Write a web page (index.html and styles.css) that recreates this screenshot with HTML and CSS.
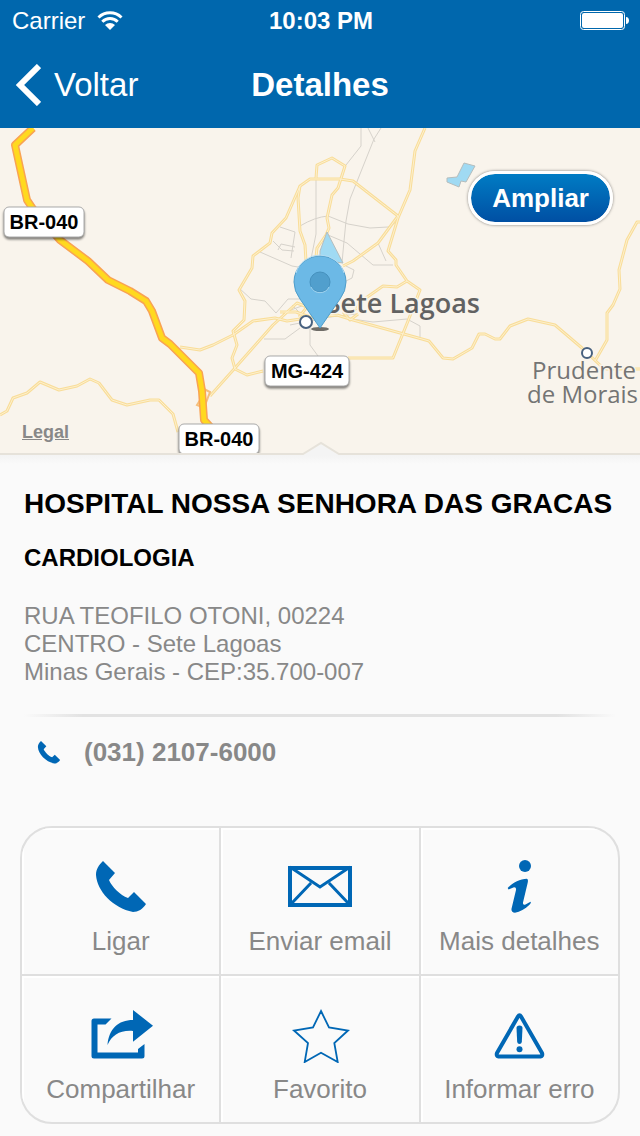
FILE: index.html
```html
<!DOCTYPE html>
<html lang="pt-BR">
<head>
    <meta charset="UTF-8">
    <meta name="viewport" content="width=device-width, initial-scale=1.0">
    <title>Detalhes</title>
    <link rel="stylesheet" href="styles.css">
</head>
<body>
    <header class="top">
        <div class="status-bar">
            <div class="carrier">
                <span>Carrier</span>
                <svg width="26" height="20" viewBox="0 0 26 20" aria-hidden="true">
                    <path d="M1.5 6.5a16.500 16.500 0 0 1 23 0M5.300 10.700a11 11 0 0 1 15.400 0" fill="none" stroke="#fff" stroke-width="3"/>
                    <path d="M13 19l-5-5a7.500 7.500 0 0 1 10 0z" fill="#fff"/>
                </svg>
            </div>
            <time class="clock">10:03 PM</time>
            <svg class="battery" width="50" height="20" viewBox="0 0 50 20" aria-hidden="true">
                <rect x="0.5" y="0.5" width="44" height="18" rx="3" fill="none" stroke="#fff"/>
                <rect x="2" y="2" width="41" height="15" rx="2" fill="#fff"/>
                <path d="M46 6c4 0 4 7 0 7z" fill="#fff"/>
            </svg>
        </div>
        <nav class="nav-bar">
            <a class="back" href="#">
                <svg width="26" height="42" viewBox="0 0 26 42" aria-hidden="true">
                    <path d="M24 2L5 21l19 19" fill="none" stroke="#fff" stroke-width="6"/>
                </svg>
                Voltar
            </a>
            <span class="nav-title">Detalhes</span>
        </nav>
    </header>

    <section class="map">
        <svg class="map-canvas" viewBox="0 0 640 328" role="img" aria-label="Mapa de Sete Lagoas">
            <defs>
                <g id="roads">
                    <path d="M0 287l7-4 6-13 14-5 13-11 19 8 18-4 13-7 9 4 13 17 15 5 23-5h9l14 14 5 18"/>
                    <path d="M425 0l-10 23-5 39-12 28-10 33 8 9v5l11 16 13 9-12 31-15 37h-45"/>
                    <path d="M316 50l1-13 15-7 13 8-7 22-6 7-5 23 2 10-3 7-9 13-2 18"/>
                    <path d="M263 243l-16 4-12-6-3-11 5-13-4-14 11-11 1-19-6-11 13-22 1-12 17-13 2-10 14-15 14-32 10-7h30l13 2 45 35-20 27-25 18-10 5"/>
                    <path d="M300 58l-2 12 2 33 5 14 1 16"/>
                    <path d="M180 219l20 3 13-5 20-10 20-14 22-3 12 3 20-3 30-3 16 5 69 19 7 2 14 17 10 1 19-11 7-14h6l10 5h5l10-13 18-7 27 6 27 23 20 19 5 2h33"/>
                    <path d="M210 268l25-28 38-43 24-22 10 4-8 10M280 184h16l14 5"/>
                    <path d="M595 233l12-21v-27l6-8 7-16-1-19 8-30 10-18h3"/>
                    <path d="M350 184l7-4 6-8 20-14 14 1 10-6M343 184l7 8 8-6"/>
                </g>
            </defs>
            <!-- ruas -->
            <g class="street">
                <path d="M361 0v18l-15 19M368 0l7 14M381 0l-7 11-14 35-10 25-4 22-2 20-2 22"/>
                <path d="M316 51v55l-5 25M300 98q15-9 28-10l20 8 22 4 18-1 10-6"/>
                <path d="M280 99l15 5-4 26M273 113l9 9 12 1M278 122l3-6 14 3M260 124l32 14 12 2M328 107l19 8 26 22h20M378 115l8 18M346 138l8 4-2 8-8 4"/>
                <path d="M239 160l12 11 14 2 11 12M264 211h21l15-11M310 199v18l8 11M276 185l12-14h14M345 190l28 4 34-3 13 7v14M290 197l40-8 26-3M292 177l12 12M288 183l22-8"/>
            </g>
            <!-- estradas -->
            <use class="road" href="#roads"/>
            <use class="road-center" href="#roads"/>
            <path class="junction" d="M202 260l8 4-6 16-7-3 5-8"/>
            <path class="highway-edge" d="M33 0L15 17l12 55 6 9 27 31 28 21 20 19 22 11 16 10 6 10 10 27 8 6 29 29 3 18 2 29 11 12 12 26"/>
            <path class="highway" d="M33 0L15 17l12 55 6 9 27 31 28 21 20 19 22 11 16 10 6 10 10 27 8 6 29 29 3 18 2 29 11 12 12 26"/>
            <!-- lagoas -->
            <path class="water" d="M464 35l11 3-9 16-5-1-2 6-12-5v-4l10-1zM327 104l16 31-23-3v-9z"/>

            <circle class="town" cx="306" cy="194" r="6"/>
            <circle class="town" cx="587" cy="225" r="5"/>
            <text class="city" x="480" y="185" text-anchor="end">Sete Lagoas</text>
            <text class="village">
                <tspan x="532" y="251">Prudente</tspan>
                <tspan x="527" y="275">de Morais</tspan>
            </text>

            <g class="shield">
                <rect x="4" y="79" width="80" height="30" rx="5"/>
                <text x="44" y="101">BR-040</text>
                <rect x="265" y="228" width="84" height="30" rx="5"/>
                <text x="307" y="250">MG-424</text>
                <rect x="179" y="296" width="80" height="30" rx="5"/>
                <text x="219" y="318">BR-040</text>
            </g>

            <!-- marcador -->
            <ellipse cx="320" cy="201" rx="9" ry="2" fill="#4c4a46" opacity="0.8"/>
            <path d="M320 200l-20-29q-6-8-6-17a26 26 0 0 1 52 0q0 9-6 17z" fill="#6cb9e6" stroke="#4f9dca" stroke-width="1"/>
            <path d="M296 145a25 25 0 0 1 48 0" fill="none" stroke="#b5dcf2"/>
            <circle cx="320" cy="154" r="10" fill="#519fcd" stroke="#4691be"/>
            <path d="M311 159a10 10 0 0 0 18 0" fill="none" stroke="#9fd2ee"/>

            <path d="M0 327h303l18-11 18 11h301v1H0z" fill="#f4f4f4"/>
            <path d="M0 326h303l18-11 18 11h301" fill="none" stroke="#e6e2da" stroke-width="2"/>
        </svg>
        <button class="zoom-button" type="button">Ampliar</button>
        <a class="legal" href="#">Legal</a>
    </section>

    <main class="details">
        <h1>HOSPITAL NOSSA SENHORA DAS GRACAS</h1>
        <h2>CARDIOLOGIA</h2>
        <address>
            RUA TEOFILO OTONI, 00224<br>
            CENTRO - Sete Lagoas<br>
            Minas Gerais - CEP:35.700-007
        </address>
        <hr>
        <a class="phone" href="tel:+553121076000">
            <svg width="24" height="24" viewBox="5 0 54 54" aria-hidden="true">
                <path d="M14 2l12 12-6 7c3 7 11 15 19 18l6-6 12 12c-3 5-8 8-13 8C24 49 8 32 7 16 7 10 10 6 14 2z"/>
            </svg>
            (031) 2107-6000
        </a>
    </main>

    <div class="actions">
        <button type="button">
            <svg width="64" height="56" viewBox="0 0 64 56" aria-hidden="true">
                <path d="M14 2l12 12-6 7c3 7 11 15 19 18l6-6 12 12c-3 5-8 8-13 8C24 49 8 32 7 16 7 10 10 6 14 2z"/>
            </svg>
            Ligar
        </button>
        <button type="button">
            <svg width="64" height="56" viewBox="0 0 64 56" aria-hidden="true">
                <g class="line">
                    <rect x="2" y="9" width="60" height="37" stroke-width="4"/>
                    <path d="M2 8l30 20L62 8M23 24L3 45M41 24l20 21" stroke-width="3"/>
                </g>
            </svg>
            Enviar email
        </button>
        <button type="button">
            <svg width="64" height="56" viewBox="0 0 64 56" aria-hidden="true">
                <circle cx="38" cy="7" r="6"/>
                <path d="M20.700 29C26 23 33 20 40 19.700q1.500 1 .7 4L36 43.500q-.5 3 2.500 2l5-2.700q1 1-1 3C38 50 33 53 28 53.700q-4-.2-3.500-4L29 31q.5-3-2-2.800L21.500 30.500z"/>
            </svg>
            Mais detalhes
        </button>
        <button type="button">
            <svg width="64" height="56" viewBox="0 0 64 56" aria-hidden="true">
                <path d="M22.500 11.500H5A2.500 2.500 0 0 0 2.500 14v35A2.500 2.500 0 0 0 5 51.500h48a2.500 2.500 0 0 0 2.500-2.500V37L49 42v3.500H8.500v-28h8z"/>
                <path d="M18.500 38C20 22 29 13 44 13V3l20 15.700-20 16V24C31 23 23 28 18.500 38z"/>
            </svg>
            Compartilhar
        </button>
        <button type="button">
            <svg width="64" height="56" viewBox="0 0 64 56" aria-hidden="true">
                <path class="line" stroke-width="1.800" d="M33 4l8 16.500 19 3L46.300 36l3.400 19L33 45.700 16.700 55 20 36 6 23.500l19-3z"/>
            </svg>
            Favorito
        </button>
        <button type="button">
            <svg width="64" height="56" viewBox="0 0 64 56" aria-hidden="true">
                <path class="line" stroke-width="4" stroke-linejoin="round" d="M31 9.500q1.500-2.500 3 0L55 46q1 3-1.500 3.500h-42Q9 49 10 46z"/>
                <path d="M29.500 21q0-2.500 3-2.500t3 2.500l-.7 14q-.3 2-2.300 2t-2.300-2z"/>
                <circle cx="32.500" cy="42.300" r="3"/>
            </svg>
            Informar erro
        </button>
    </div>
</body>
</html>
```
FILE: styles.css
```css
* {
    margin: 0;
    padding: 0;
    box-sizing: border-box;
}

body {
    font-family: "Helvetica Neue", "Liberation Sans", Arial, sans-serif;
    background: #fafafa;
    color: #888;
}

a {
    color: inherit;
    text-decoration: none;
}

button {
    font-family: inherit;
    border: none;
    cursor: pointer;
}

.top {
    background: #0067ad;
    color: #fff;
}

.status-bar,
.nav-bar {
    display: grid;
    grid-template-columns: 1fr auto 1fr;
    align-items: center;
}

.status-bar {
    height: 42px;
    padding: 0 10px 0 12px;
    font-size: 24px;
}

.carrier {
    display: flex;
    align-items: center;
    gap: 12px;
}

.clock {
    font-weight: bold;
}

.battery {
    justify-self: end;
}

.nav-bar {
    height: 86px;
    padding: 0 15px;
    font-size: 33px;
}

.back {
    display: flex;
    align-items: center;
    gap: 13px;
}

.nav-title {
    font-weight: bold;
}

/* Mapa */
.map {
    position: relative;
    background: #f9f4ec;
}

.map-canvas {
    display: block;
    width: 100%;
    height: auto;
}

.street {
    fill: none;
    stroke: #d6d2cb;
    stroke-width: 1;
}

.road,
.road-center {
    fill: none;
    stroke: #f9dd98;
    stroke-width: 3;
    stroke-linejoin: round;
}

.road-center {
    stroke: #fdf0cf;
    stroke-width: 1;
}

.junction {
    fill: none;
    stroke: #f5bf7c;
    stroke-width: 2;
}

.highway,
.highway-edge {
    fill: none;
    stroke: #ffd91f;
    stroke-width: 5;
    stroke-linejoin: round;
}

.highway-edge {
    stroke: #f9a353;
    stroke-width: 8;
}

.water {
    fill: #a0daf3;
    stroke: #b5bdbd;
    stroke-width: 1;
}

.town {
    fill: #fff;
    stroke: #48617f;
    stroke-width: 2;
}

.city,
.village {
    font-family: "Open Sans", "Noto Sans", sans-serif;
    font-size: 27px;
    font-weight: 600;
    fill: #626262;
    stroke: #f9f4ec;
    stroke-width: 3;
    paint-order: stroke;
}

.village {
    font-size: 24px;
    font-weight: 500;
    fill: #747474;
}

.shield rect {
    fill: #fff;
    stroke: #aaa;
    filter: drop-shadow(0 2px 1px rgba(0, 0, 0, 0.5));
}

.shield text {
    font-size: 20px;
    font-weight: bold;
    text-anchor: middle;
    fill: #000;
}

.zoom-button {
    position: absolute;
    top: 43px;
    right: 27px;
    padding: 9px 21px;
    border: 3px solid #fff;
    border-radius: 27px;
    background: linear-gradient(#007cc4, #004fa3) padding-box;
    box-shadow: 0 0 3px rgba(0, 0, 0, 0.5);
    color: #fff;
    font-size: 26px;
    font-weight: bold;
    line-height: 30px;
}

.legal {
    position: absolute;
    left: 22px;
    bottom: 13px;
    font-size: 18px;
    font-weight: bold;
    text-decoration: underline;
}

/* Dados do local */
.details {
    padding: 30px 24px 0;
    background: linear-gradient(#f4f4f4, #fafafa 8px);
}

h1 {
    font-size: 28px;
    line-height: 36px;
    color: #000;
}

h2 {
    margin-top: 21px;
    font-size: 24px;
    line-height: 30px;
    color: #000;
}

address {
    margin-top: 29px;
    font-size: 24px;
    font-style: normal;
    line-height: 28px;
}

hr {
    height: 3px;
    margin-top: 28px;
    border: none;
    background: linear-gradient(90deg, #fafafa, #e2e2e2 10%, #e2e2e2 90%, #fafafa);
}

.phone {
    display: flex;
    align-items: center;
    gap: 23px;
    margin-top: 19px;
    padding-left: 13px;
    font-size: 26px;
    font-weight: bold;
    line-height: 32px;
}

.phone svg,
.actions svg {
    fill: #0067b5;
}

/* Botões de ação */
.actions {
    display: grid;
    grid-template-columns: repeat(3, 1fr);
    gap: 2px;
    margin: 58px 20px 12px;
    border: 2px solid #dfdfdf;
    border-radius: 32px;
    background: #dfdfdf;
    overflow: hidden;
}

.actions button {
    display: flex;
    flex-direction: column;
    align-items: center;
    gap: 11px;
    padding: 31px 0 18px;
    background: #fafafa;
    box-shadow: inset 2px 2px #fff;
    color: #888;
    font-size: 26px;
    line-height: 30px;
}

.actions .line {
    fill: none;
    stroke: #0067b5;
}
```
